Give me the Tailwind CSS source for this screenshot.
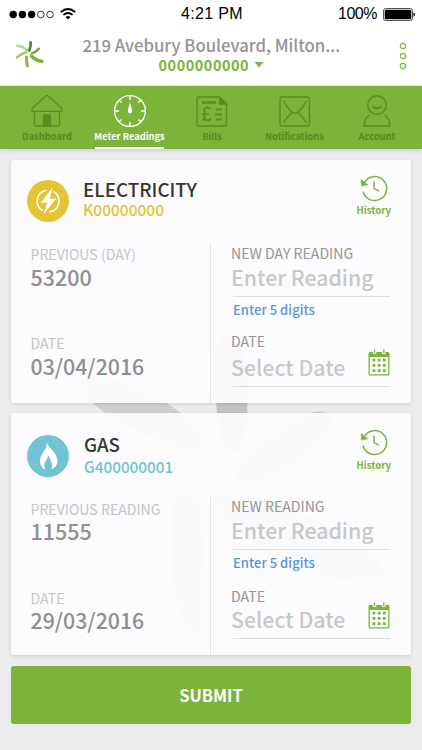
<!DOCTYPE html>
<html lang="en">
<head>
    <meta charset="UTF-8">
    <meta name="viewport" content="width=device-width, initial-scale=1.0">
    <title>Meter Readings</title>
    <script src="https://cdn.jsdelivr.net/npm/@tailwindcss/browser@4"></script>
</head>
<body class="bg-[#ebecee]">

    <!-- Shared icons -->
    <svg class="hidden">
        <symbol id="history" viewBox="0 0 28 28">
            <path d="M4.200 8.600A12 12 0 1 1 3 17.500" fill="none" stroke="#7bb33b" stroke-width="1.500"/>
            <path d="M1 5.600L7.800 10.800L1.400 12Z" fill="#7bb33b" stroke="#7bb33b" stroke-width=".6"/>
            <path d="M14 7.200V14.600L19.200 17.200" fill="none" stroke="#7bb33b" stroke-width="1.400"/>
        </symbol>
        <symbol id="calendar" viewBox="0 0 22 27">
            <path d="M2 3H20Q21.500 3 21.500 4.500V25Q21.500 26.500 20 26.500H2Q.500 26.500 .500 25V4.500Q.500 3 2 3ZM1.800 8V24.700Q1.800 25.200 2.300 25.200H19.700Q20.200 25.200 20.200 24.700V8Z" fill="#7bb33b" fill-rule="evenodd"/>
            <path d="M6.500 0V5M15.800 0V5" stroke="#fcfcfe" stroke-width="3.400"/>
            <path d="M6.500 .4V4.200M15.800 .4V4.200" stroke="#7bb33b" stroke-width="1.300"/>
            <path d="M4.500 11.200H17.700M4.500 16.400H17.700M4.500 21.600H17.700" stroke="#7bb33b" stroke-width="2.800" stroke-dasharray="2.800 2.400"/>
        </symbol>
    </svg>

    <div class="relative flex h-[750px] w-[422px] flex-col overflow-hidden font-['Noto_Sans_CJK_SC',sans-serif]">

        <!-- Background flower -->
        <svg class="absolute top-0 left-0" width="422" height="750" fill="#cfd0d2">
            <path d="M82 388C78 370 110 375 150 394C180 408 203 430 202 442C200 452 180 450 160 441C130 428 88 408 82 388Z"/>
            <path d="M216 350C216 333 234 330 240 345C248 365 249 410 246 430C242 455 228 458 222 440C215 410 213 370 216 350Z" fill="#c3c4c6"/>
            <path d="M236 474C240 458 270 435 305 415C320 408 333 412 332 422C328 445 280 475 255 481C240 484 234 482 236 474Z"/>
            <path d="M183 460C178 452 150 456 130 468C100 485 72 515 78 530C85 538 110 528 140 508C165 490 185 475 183 460Z" fill="#dedfe1"/>
            <path d="M172 510C174 485 198 482 200 505C202 540 210 600 206 622C203 636 188 636 182 620C172 595 168 540 172 510Z"/>
            <path d="M216 500C222 486 260 495 300 513C350 535 390 560 383 577C375 588 330 580 300 567C260 550 215 520 216 500Z"/>
        </svg>

        <!-- Status bar and address -->
        <header class="relative h-[86px] shrink-0 border-b border-[#dfe9ee] bg-white">
            <div class="flex h-7 items-center justify-between pr-[7px] pl-[9px] font-['Liberation_Sans',sans-serif] text-[16px] text-black">
                <div class="flex w-[110px] items-center gap-[6px]">
                    <svg width="45" height="9" viewBox="0 0 45 9">
                        <circle cx="4.200" cy="4.500" r="3.700"/>
                        <circle cx="13.400" cy="4.500" r="3.700"/>
                        <circle cx="22.600" cy="4.500" r="3.700"/>
                        <circle cx="31.800" cy="4.500" r="3.300" fill="none" stroke="#000" stroke-width=".8"/>
                        <circle cx="41" cy="4.500" r="3.300" fill="none" stroke="#000" stroke-width=".8"/>
                    </svg>
                    <svg width="16" height="12" viewBox="0 0 16 12" fill="none" stroke="#000" stroke-width="1.900">
                        <path d="M.8 4.100Q8-2.100 15.200 4.100M3.400 6.900Q8 3 12.600 6.900"/>
                        <path d="M5.500 9Q8 7 10.500 9L8 11.600Z" fill="#000" stroke="none"/>
                    </svg>
                </div>
                <div class="tracking-[0.35px]">4:21 PM</div>
                <div class="flex w-[110px] items-center justify-end gap-[6px]">
                    <span class="tracking-[-0.5px]">100%</span>
                    <svg width="32" height="13" viewBox="0 0 32 13">
                        <rect x=".5" y=".5" width="29" height="12" rx="2" fill="#fff" stroke="#555"/>
                        <rect x="1.700" y="1.700" width="26.600" height="9.600" rx="1"/>
                        <path d="M30.500 4.300Q32 5 32 6.500T30.500 8.700Z"/>
                    </svg>
                </div>
            </div>
            <div class="flex items-start pr-[15px] pl-[15px]">
                <svg class="mt-[12px]" width="30" height="29" viewBox="0 0 30 29" stroke-linecap="round">
                    <path d="M2.500 5.700Q8 6.500 12 10" fill="none" stroke="#b4d58a" stroke-width="2.600"/>
                    <path d="M2 17.300Q6 13.800 11.200 12.300" fill="none" stroke="#a2cb74" stroke-width="2.600"/>
                    <path d="M15.600 2.300Q16 6 14.300 10.600" fill="none" stroke="#4c8a34" stroke-width="2.800"/>
                    <path d="M23.800 8.700Q21 12 17 13.300" fill="none" stroke="#609d36" stroke-width="2.200"/>
                    <path d="M11.600 17Q11.200 21.500 12.400 25.800" fill="none" stroke="#86bf4c" stroke-width="3.200"/>
                    <path d="M16.300 16Q20.500 20.500 27 21.400" fill="none" stroke="#7bb33b" stroke-width="3.400"/>
                </svg>
                <div class="ml-[37.500px] flex flex-col items-center pt-[5px]">
                    <div class="text-[16.700px] leading-[24px] font-medium whitespace-nowrap text-[#949494]">219 Avebury Boulevard, Milton...</div>
                    <div class="-mt-[1px] flex items-center gap-[5px] text-[14.500px] leading-[18px] font-bold text-[#7bb33b]">
                        <span class="tracking-[0.5px]">0000000000</span>
                        <svg width="10" height="6" viewBox="0 0 10 6"><path d="M.5 0H9.500L5 5.500Z" fill="#7bb33b"/></svg>
                    </div>
                </div>
                <svg class="mt-[13px] ml-auto" width="8" height="30" viewBox="0 0 8 30" fill="none" stroke="#7bb33b" stroke-width="1.200">
                    <circle cx="4" cy="5" r="2.700"/>
                    <circle cx="4" cy="15" r="2.700"/>
                    <circle cx="4" cy="25" r="2.700"/>
                </svg>
            </div>
        </header>

        <!-- Tabs -->
        <nav class="relative flex h-[63px] shrink-0 justify-center pl-[2px] bg-[#7bb33b] text-[9.300px] leading-[14px] font-bold text-[#528c20] shadow-[0_2px_4px_rgba(0,0,0,0.12)]">
            <div class="flex w-[82.500px] flex-col items-center pt-2">
                <svg width="34" height="34" viewBox="0 0 34 34" fill="none" stroke="#568f23" stroke-width="1.300" stroke-linejoin="round">
                    <path d="M4.500 17.500V30.500Q4.500 32 6 32H28Q29.500 32 29.500 30.500V17.500M17 1.500Q16 1.500 14.500 3L2.200 14.500Q1 17.300 3 17.300H31Q33 17.300 31.800 14.500L19.500 3Q18 1.500 17 1.500Z"/>
                    <path d="M13.500 32V22Q13.500 21 14.500 21H19.500Q20.500 21 20.500 22V32Z" fill="#568f23"/>
                </svg>
                <span class="mt-[1px]">Dashboard</span>
            </div>
            <div class="flex w-[82.500px] flex-col items-center pt-2 text-white">
                <svg width="34" height="34" viewBox="0 0 34 34" fill="none" stroke="#fff" stroke-width="1.400">
                    <circle cx="17" cy="17" r="15.400"/>
                    <path d="M17 2V6M17 28V32M2 17H6M28 17H32M6.400 6.400L8.600 8.600M25.400 25.400L27.600 27.600M6.400 27.600L8.600 25.400M25.400 8.600L27.600 6.400"/>
                    <path d="M17 8L19.200 17Q19.200 19.400 17 19.400T14.800 17Z" fill="#fff" stroke="none"/>
                </svg>
                <span class="mt-[1px] whitespace-nowrap">Meter Readings</span>
                <span class="mt-auto h-[2px] w-[69px] bg-white"></span>
            </div>
            <div class="flex w-[82.500px] flex-col items-center pt-2">
                <svg width="34" height="34" viewBox="0 0 34 34" fill="none" stroke="#568f23" stroke-width="1.300">
                    <path d="M4 3H24.500L31.500 10V30Q31.500 32 29.500 32H4Q2 32 2 30V5Q2 3 4 3Z"/>
                    <path d="M24.500 3V10H31.500Z" fill="#568f23"/>
                    <path d="M7 8.500H21" stroke-width="2.400"/>
                    <path d="M21 15.500H27M20 20.500H27M21 25.500H27" stroke-width="2"/>
                    <path d="M15 15.500Q14 13 11.500 13.500Q8.500 14.500 9.500 18Q10.800 23 7.500 26Q10 25 12 26T16 25M6.500 20.200H14" stroke-width="1.800"/>
                </svg>
                <span class="mt-[1px]">Bills</span>
            </div>
            <div class="flex w-[82.500px] flex-col items-center pt-2">
                <svg width="34" height="34" viewBox="0 0 34 34" fill="none" stroke="#568f23" stroke-width="1.400">
                    <rect x="2" y="3" width="29.500" height="29" rx="2"/>
                    <path d="M5.500 6.500Q8 12.500 14 18.200Q17 20.200 20 18.200Q26 12.500 28.500 6.500M14 18.200Q9.500 22.500 5.500 29M20 18.200Q24.500 22.500 28.500 29"/>
                </svg>
                <span class="mt-[1px]">Notifications</span>
            </div>
            <div class="flex w-[82.500px] flex-col items-center pt-2">
                <svg width="34" height="34" viewBox="0 0 34 34" fill="none" stroke="#568f23" stroke-width="1.400">
                    <circle cx="17" cy="11" r="9.300"/>
                    <path d="M12.500 12.500Q17 16 21.500 12.500" stroke-width="1.800"/>
                    <path d="M9.500 21Q4.500 24 4 32H30Q29.500 24 24.500 21"/>
                </svg>
                <span class="mt-[1px]">Account</span>
            </div>
        </nav>

        <main class="relative flex flex-col px-[11px] pt-[11px]">

            <!-- Electricity -->
            <section class="flex h-[243px] flex-col rounded-[3px] bg-[#fdfdff]/92 shadow-[0_1px_4px_rgba(0,0,0,0.12)]">
                <div class="flex h-[84px] shrink-0 pl-[16px]">
                    <svg class="mt-[20px]" width="42" height="42" viewBox="0 0 42 42">
                        <circle cx="21" cy="21" r="21" fill="#e2c434"/>
                        <path d="M19.500 10.200A11 11 0 0 0 15.500 30.500M22.500 31.900A11 11 0 0 0 26.500 11.500" fill="none" stroke="#fff" stroke-width="1.600"/>
                        <path d="M25.500 7.500L13.500 23.300L20.200 22.300L16.500 34.500L29.500 18.300L22.800 19.300Z" fill="#fff"/>
                    </svg>
                    <div class="flex flex-col pt-[18px] pl-[14px]">
                        <span class="text-[18.800px] leading-[22px] font-medium text-[#35362f]">ELECTRICITY</span>
                        <span class="text-[15.500px] leading-[18px] font-medium text-[#e2c434]">K00000000</span>
                    </div>
                    <div class="mr-[20px] ml-auto flex flex-col items-center pt-[14px]">
                        <svg width="28" height="28"><use href="#history"/></svg>
                        <span class="mt-[1px] text-[9.600px] leading-[14px] font-bold text-[#7bb33b]">History</span>
                    </div>
                </div>
                <div class="flex flex-1">
                    <div class="flex w-[200px] flex-col border-r border-[#e1e2e4] pt-[1px] pl-[19.500px]">
                        <span class="text-[14.100px] leading-[18px] text-[#c4c4c6]">PREVIOUS (DAY)</span>
                        <span class="mt-[2px] text-[21.500px] leading-[24px] font-medium text-[#8f8f8f]">53200</span>
                        <span class="mt-[45px] text-[14.100px] leading-[18px] text-[#c4c4c6]">DATE</span>
                        <span class="mt-[2px] text-[21.300px] leading-[24px] font-medium text-[#8f8f8f]">03/04/2016</span>
                    </div>
                    <div class="flex flex-1 flex-col pr-[21px] pl-[20px]">
                        <span class="text-[14.100px] leading-[18px] text-[#949494]">NEW DAY READING</span>
                        <div class="mt-[3px] text-[21.300px] leading-[24px] font-medium text-[#c8c8c8]">Enter Reading</div>
                        <div class="mt-[7px] ml-[2px] h-px bg-[#dcdddf]"></div>
                        <span class="mt-[4px] ml-[2px] text-[13.100px] leading-[18px] font-medium text-[#5e93d8]">Enter 5 digits</span>
                        <span class="mt-[13px] text-[14.100px] leading-[18px] text-[#949494]">DATE</span>
                        <div class="mt-[4px] flex items-end justify-between">
                            <span class="text-[21.300px] leading-[24px] font-medium text-[#c8c8c8]">Select Date</span>
                            <svg class="-mt-[5px] mb-[3px]" width="22" height="27"><use href="#calendar"/></svg>
                        </div>
                        <div class="mt-[7px] ml-[2px] h-px bg-[#dcdddf]"></div>
                    </div>
                </div>
            </section>

            <!-- Gas -->
            <section class="mt-[10px] flex h-[242px] flex-col rounded-[3px] bg-[#fdfdff]/92 shadow-[0_1px_4px_rgba(0,0,0,0.12)]">
                <div class="flex h-[84px] shrink-0 pl-[16px]">
                    <svg class="mt-[22px]" width="42" height="42" viewBox="0 0 42 42">
                        <circle cx="21" cy="21" r="21" fill="#71c2d3"/>
                        <path d="M19.500 7.500C21 15 13 18 13 26C13 31 16 34 18.500 34.500C15 29 20 25 21.500 20.500C23 25 27 29 24 34.500C28 33 30.500 30 30.500 26C30.500 19 23 14 19.500 7.500Z" fill="#fff"/>
                    </svg>
                    <div class="flex flex-col pt-[20px] pl-[15px]">
                        <span class="text-[18.700px] leading-[22px] font-medium text-[#35362f]">GAS</span>
                        <span class="mt-[2px] text-[15.300px] leading-[18px] font-medium text-[#71c2d3]">G400000001</span>
                    </div>
                    <div class="mr-[20px] ml-auto flex flex-col items-center pt-[15px]">
                        <svg width="28" height="28"><use href="#history"/></svg>
                        <span class="mt-[2px] text-[9.600px] leading-[14px] font-bold text-[#7bb33b]">History</span>
                    </div>
                </div>
                <div class="flex flex-1">
                    <div class="flex w-[200px] flex-col border-r border-[#e1e2e4] pt-[3px] pl-[19.500px]">
                        <span class="text-[14.100px] leading-[18px] text-[#c4c4c6]">PREVIOUS READING</span>
                        <span class="mt-[1px] text-[21.500px] leading-[24px] font-medium text-[#8f8f8f]">11555</span>
                        <span class="mt-[46px] text-[14.100px] leading-[18px] text-[#c4c4c6]">DATE</span>
                        <span class="mt-[1px] text-[21.300px] leading-[24px] font-medium text-[#8f8f8f]">29/03/2016</span>
                    </div>
                    <div class="flex flex-1 flex-col pr-[21px] pl-[20px]">
                        <span class="text-[14.100px] leading-[18px] text-[#949494]">NEW READING</span>
                        <div class="mt-[3px] text-[21.300px] leading-[24px] font-medium text-[#c8c8c8]">Enter Reading</div>
                        <div class="mt-[7px] ml-[2px] h-px bg-[#dcdddf]"></div>
                        <span class="mt-[4px] ml-[2px] text-[13.100px] leading-[18px] font-medium text-[#5e93d8]">Enter 5 digits</span>
                        <span class="mt-[15px] text-[14.100px] leading-[18px] text-[#949494]">DATE</span>
                        <div class="mt-[2px] flex items-end justify-between">
                            <span class="text-[21.300px] leading-[24px] font-medium text-[#c8c8c8]">Select Date</span>
                            <svg class="-mt-[5px] mb-[2px]" width="22" height="27"><use href="#calendar"/></svg>
                        </div>
                        <div class="mt-[7px] ml-[2px] h-px bg-[#dcdddf]"></div>
                    </div>
                </div>
            </section>

            <button class="mt-[11px] h-[58px] rounded-[3px] bg-[#7bb33b] text-[16.500px] font-bold text-white">SUBMIT</button>
        </main>
    </div>
</body>
</html>
